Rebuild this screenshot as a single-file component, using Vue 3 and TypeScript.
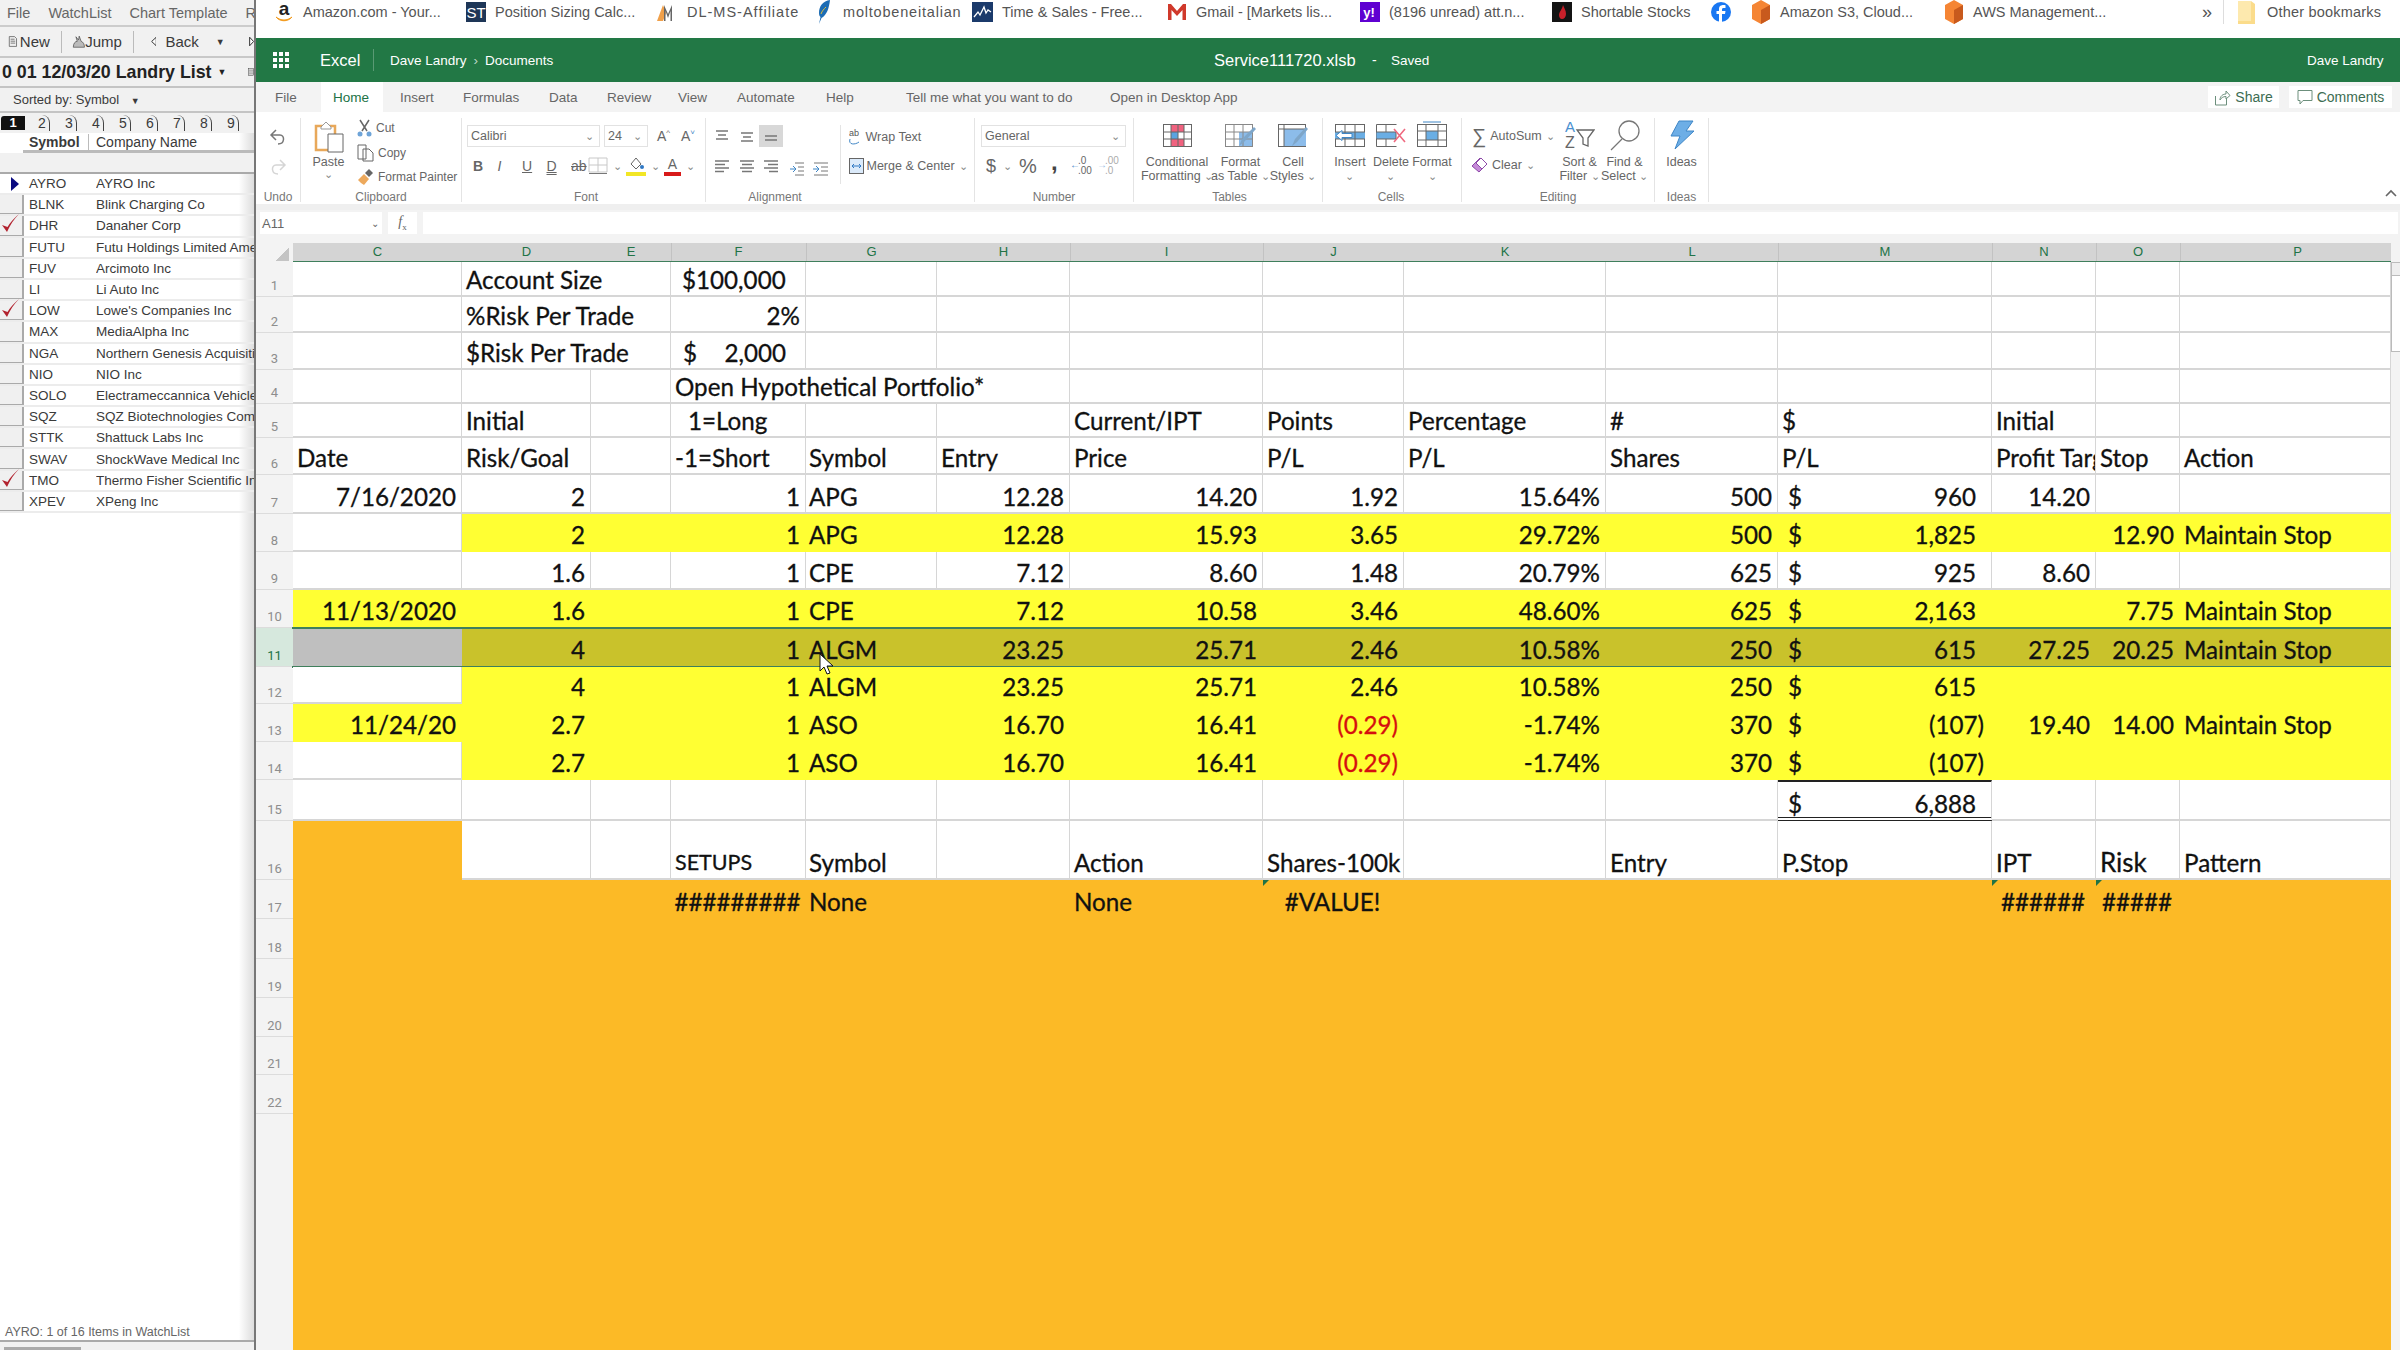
<script setup lang="ts">
type Cell = { t?: string; cls?: string; cur?: boolean; span?: number };
type Row = {
  n: number;
  h: number;
  fillFrom?: string;
  fill?: string;
  cells: Record<string, Cell | string>;
};

const columns = ["C", "D", "E", "F", "G", "H", "I", "J", "K", "L", "M", "N", "O", "P"];
const sepColumns = ["F", "G", "I", "J", "M", "N", "O", "P"];

const r = (t: string): Cell => ({ t, cls: "right" });
const red = (t: string): Cell => ({ t, cls: "right neg" });
const usd = (t: string, cls = ""): Cell => ({ t, cur: true, cls });

const rawRows: Row[] = [
  { n: 1, h: 35, cells: { D: { t: "Account Size", span: 2 }, F: { t: "$100,000", cls: "acct" } } },
  { n: 2, h: 36, cells: { D: { t: "%Risk Per Trade", span: 2 }, F: r("2%") } },
  { n: 3, h: 37, cells: { D: { t: "$Risk Per Trade", span: 2 }, F: { t: "2,000", cur: true, cls: "usd-wide" } } },
  { n: 4, h: 34, cells: { F: { t: "Open Hypothetical Portfolio*", span: 3 } } },
  { n: 5, h: 34, cells: { D: "Initial", F: { t: "1=Long", cls: "long" }, I: "Current/IPT", J: "Points", K: "Percentage", L: "#", M: "$", N: "Initial" } },
  { n: 6, h: 37, cells: { C: "Date", D: "Risk/Goal", F: "-1=Short", G: "Symbol", H: "Entry", I: "Price", J: "P/L", K: "P/L", L: "Shares", M: "P/L", N: "Profit Target", O: "Stop", P: "Action" } },
  { n: 7, h: 39, cells: { C: r("7/16/2020"), D: r("2"), F: r("1"), G: "APG", H: r("12.28"), I: r("14.20"), J: r("1.92"), K: r("15.64%"), L: r("500"), M: usd("960"), N: r("14.20") } },
  { n: 8, h: 38, fillFrom: "D", fill: "yellow", cells: { D: r("2"), F: r("1"), G: "APG", H: r("12.28"), I: r("15.93"), J: r("3.65"), K: r("29.72%"), L: r("500"), M: usd("1,825"), O: r("12.90"), P: "Maintain Stop" } },
  { n: 9, h: 38, cells: { D: r("1.6"), F: r("1"), G: "CPE", H: r("7.12"), I: r("8.60"), J: r("1.48"), K: r("20.79%"), L: r("625"), M: usd("925"), N: r("8.60") } },
  { n: 10, h: 38, fillFrom: "C", fill: "yellow", cells: { C: r("11/13/2020"), D: r("1.6"), F: r("1"), G: "CPE", H: r("7.12"), I: r("10.58"), J: r("3.46"), K: r("48.60%"), L: r("625"), M: usd("2,163"), O: r("7.75"), P: "Maintain Stop" } },
  { n: 11, h: 39, fillFrom: "D", fill: "olive", cells: { C: { cls: "grey" }, D: r("4"), F: r("1"), G: "ALGM", H: r("23.25"), I: r("25.71"), J: r("2.46"), K: r("10.58%"), L: r("250"), M: usd("615"), N: r("27.25"), O: r("20.25"), P: "Maintain Stop" } },
  { n: 12, h: 37, fillFrom: "D", fill: "yellow", cells: { D: r("4"), F: r("1"), G: "ALGM", H: r("23.25"), I: r("25.71"), J: r("2.46"), K: r("10.58%"), L: r("250"), M: usd("615") } },
  { n: 13, h: 38, fillFrom: "C", fill: "yellow", cells: { C: r("11/24/20"), D: r("2.7"), F: r("1"), G: "ASO", H: r("16.70"), I: r("16.41"), J: red("(0.29)"), K: r("-1.74%"), L: r("370"), M: usd("(107)", "paren"), N: r("19.40"), O: r("14.00"), P: "Maintain Stop" } },
  { n: 14, h: 38, fillFrom: "D", fill: "yellow", cells: { D: r("2.7"), F: r("1"), G: "ASO", H: r("16.70"), I: r("16.41"), J: red("(0.29)"), K: r("-1.74%"), L: r("370"), M: usd("(107)", "paren") } },
  { n: 15, h: 41, cells: { M: usd("6,888", "total") } },
  { n: 16, h: 59, cells: { C: { cls: "orange" }, F: { t: "SETUPS", cls: "caps" }, G: "Symbol", I: "Action", J: "Shares-100k", L: "Entry", M: "P.Stop", N: "IPT", O: { t: "Risk", cls: "large" }, P: "Pattern" } },
  { n: 17, h: 39, fillFrom: "C", fill: "orange", cells: { F: { t: "#########", cls: "center" }, G: "None", I: "None", J: { t: "#VALUE!", cls: "center tri" }, N: { t: "######", cls: "center tri" }, O: { t: "#####", cls: "center tri" } } },
  { n: 18, h: 40, fillFrom: "C", fill: "orange", cells: {} },
  { n: 19, h: 39, fillFrom: "C", fill: "orange", cells: {} },
  { n: 20, h: 39, fillFrom: "C", fill: "orange", cells: {} },
  { n: 21, h: 38, fillFrom: "C", fill: "orange", cells: {} },
  { n: 22, h: 39, fillFrom: "C", fill: "orange", cells: {} },
];

// expand each row into one entry per visible column, honouring merged cells
const rows = rawRows.map((row) => {
  const out: { col: string; cell: Cell; fill: string; span: number }[] = [];
  const from = row.fillFrom ? columns.indexOf(row.fillFrom) : 99;
  let skip = 0;
  columns.forEach((col, i) => {
    if (skip > 0) {
      skip--;
      return;
    }
    const raw = row.cells[col];
    const cell: Cell = typeof raw === "string" ? { t: raw } : raw ?? {};
    const span = cell.span ?? 1;
    skip = span - 1;
    out.push({ col, cell, span, fill: i >= from ? row.fill ?? "" : "" });
  });
  return { n: row.n, h: row.h, selected: row.n === 11, cells: out };
});

const bookmarks = [
  { id: "amazon", w: 192, ls: 0, label: "Amazon.com - Your..." },
  { id: "st", w: 192, ls: 0, label: "Position Sizing Calc..." },
  { id: "dl", w: 156, ls: 1, label: "DL-MS-Affiliate" },
  { id: "feather", w: 159, ls: 0.8, label: "moltobeneitalian" },
  { id: "chart", w: 194, ls: 0, label: "Time & Sales - Free..." },
  { id: "gmail", w: 193, ls: 0, label: "Gmail - [Markets lis..." },
  { id: "yahoo", w: 192, ls: 0, label: "(8196 unread) att.n..." },
  { id: "short", w: 159, ls: 0, label: "Shortable Stocks" },
  { id: "fb", w: 40, ls: 0, label: "" },
  { id: "aws", w: 193, ls: 0, label: "Amazon S3, Cloud..." },
  { id: "aws", w: 259, ls: 0, label: "AWS Management..." },
];

const tabs = [
  { label: "File", w: 65, pad: 19 },
  { label: "Home", w: 62, pad: 12, active: true },
  { label: "Insert", w: 80, pad: 17 },
  { label: "Formulas", w: 86, pad: 0 },
  { label: "Data", w: 58, pad: 0 },
  { label: "Review", w: 71, pad: 0 },
  { label: "View", w: 59, pad: 0 },
  { label: "Automate", w: 89, pad: 0 },
  { label: "Help", w: 80, pad: 0 },
  { label: "Tell me what you want to do", w: 204, pad: 0 },
  { label: "Open in Desktop App", w: 150, pad: 0 },
];

const watchlist = [
  ["AYRO", "AYRO Inc", "cur"],
  ["BLNK", "Blink Charging Co", ""],
  ["DHR", "Danaher Corp", "chk"],
  ["FUTU", "Futu Holdings Limited American", ""],
  ["FUV", "Arcimoto Inc", ""],
  ["LI", "Li Auto Inc", ""],
  ["LOW", "Lowe's Companies Inc", "chk"],
  ["MAX", "MediaAlpha Inc", ""],
  ["NGA", "Northern Genesis Acquisition", ""],
  ["NIO", "NIO Inc", ""],
  ["SOLO", "Electrameccannica Vehicles", ""],
  ["SQZ", "SQZ Biotechnologies Company", ""],
  ["STTK", "Shattuck Labs Inc", ""],
  ["SWAV", "ShockWave Medical Inc", ""],
  ["TMO", "Thermo Fisher Scientific Inc", "chk"],
  ["XPEV", "XPeng Inc", ""],
];
</script>

<template>
  <div class="screen">
    <aside class="side">
      <div class="side-menu">
        <span>File</span><span>WatchList</span><span>Chart Template</span><span>R</span>
      </div>
      <div class="side-tools">
        <svg width="15" height="17" viewBox="0 0 15 17"><path d="M2 1h8l3 3v12H2z" fill="#eee" stroke="#444" /><path d="M4 5h6M4 8h7M4 11h7" stroke="#444" /></svg>
        <span class="tool-new">New</span>
        <i class="tool-sep"></i>
        <svg class="tool-jump" width="21" height="22" viewBox="0 0 21 20"><path d="M2 18c0-6 3-9 6-9L6 2l4 5 1-6 3 8c3 1 5 4 5 9z" fill="#bbb" stroke="#444" /></svg>
        <span>Jump</span>
        <i class="tool-sep"></i>
        <svg class="tool-back" width="9" height="15" viewBox="0 0 9 15"><path d="M8 1 1 7.5 8 14z" fill="#fff" stroke="#222" stroke-width="1.4" /></svg>
        <span>Back</span>
        <span class="tool-drop">▼</span>
        <svg class="tool-fwd" width="8" height="15" viewBox="0 0 8 15"><path d="M1 1l6 6.500-6 6.500z" fill="#fff" stroke="#222" stroke-width="1.4" /></svg>
      </div>
      <div class="side-title">
        <span>0 01 12/03/20 Landry List</span><small>▼</small>
        <svg width="12" height="18" viewBox="0 0 12 18"><rect x="0.500" y="1" width="11.500" height="16" fill="#eee" stroke="#333" /><path d="M2 5h10M2 9h10M2 13h10" stroke="#333" /></svg>
      </div>
      <div class="side-sort">Sorted by: Symbol <small>▼</small></div>
      <div class="side-tabs">
        <b>1</b>
        <span v-for="n in 8" :key="n">{{ n + 1 }}</span>
      </div>
      <div class="side-head"><b>Symbol</b><span>Company Name</span></div>
      <div class="side-band"></div>
      <div v-for="(w, i) in watchlist" :key="w[0]" class="side-row" :class="{ first: i === 0 }">
        <div class="side-mark">
          <svg v-if="w[2] === 'cur'" width="10" height="14" viewBox="0 0 10 14"><path d="M1 0l8 7-8 7z" fill="#0a0a80" /></svg>
          <svg v-if="w[2] === 'chk'" class="check" width="19" height="21" viewBox="0 0 19 21"><path d="M1 12l5 7C9 12 13 6 18 1 13 5 9 10 6.500 14z" fill="#b2232f" /></svg>
        </div>
        <span class="side-sym">{{ w[0] }}</span>
        <span class="side-name">{{ w[1] }}</span>
      </div>
      <div class="side-fill"></div>
      <div class="side-status">AYRO: 1 of 16 Items in WatchList</div>
      <div class="side-bottom"><i></i></div>
    </aside>

    <main class="excel">
      <nav class="bookmarks">
        <a v-for="(b, i) in bookmarks" :key="i" class="bm" :style="{ width: b.w + 'px', letterSpacing: b.ls + 'px' }">
          <span class="bm-icon">
            <svg v-if="b.id === 'amazon'" width="20" height="24" viewBox="0 0 20 24">
              <text x="10" y="15" text-anchor="middle" font-size="19" font-weight="700" font-family="Liberation Sans" fill="#222">a</text>
              <path d="M2 17c5 4 11 4 16 0-4 5-12 5-16 0z" fill="#f39a1c" stroke="#f39a1c" />
            </svg>
            <svg v-else-if="b.id === 'st'" width="20" height="20" viewBox="0 0 20 20">
              <rect width="20" height="20" fill="#1e3657" />
              <text x="10" y="16" text-anchor="middle" font-size="15" font-family="Liberation Sans" fill="#fff">ST</text>
            </svg>
            <svg v-else-if="b.id === 'dl'" width="21" height="20" viewBox="0 0 21 20">
              <path d="M0 19 6 3l3 8-3 8z" fill="#f0a04a" />
              <path d="M7 19V3l4 9 4-9v16h-1.500V9L11 16 8.500 9v10z" fill="#666" />
            </svg>
            <svg v-else-if="b.id === 'feather'" width="14" height="24" viewBox="0 0 14 24">
              <path d="M13 0C6 1 2 6 2 13c0 2 .5 3 1.500 4L2 24l2.500-6C10 15 12 8 13 0z" fill="#1c6cb4" />
              <path d="M4 14c1-3 3-5 5-7" stroke="#e0c040" fill="none" />
            </svg>
            <svg v-else-if="b.id === 'chart'" width="21" height="20" viewBox="0 0 21 20">
              <rect width="21" height="20" fill="#1b3a6b" />
              <path d="M2 15l4-5 2 3 4-8 2 6 2-3 3 2" stroke="#fff" fill="none" stroke-width="1.300" />
            </svg>
            <svg v-else-if="b.id === 'gmail'" width="20" height="18" viewBox="0 0 20 18">
              <path d="M1 1h3l6 7 6-7h3v16h-3.500V7L10 13 4.500 7v10H1z" fill="#d0392b" />
            </svg>
            <svg v-else-if="b.id === 'yahoo'" width="20" height="20" viewBox="0 0 20 20">
              <rect width="20" height="20" fill="#5f01d1" />
              <text x="9" y="15" text-anchor="middle" font-size="13" font-weight="700" font-family="Liberation Sans" fill="#fff">y!</text>
            </svg>
            <svg v-else-if="b.id === 'short'" width="20" height="20" viewBox="0 0 20 20">
              <rect width="20" height="20" fill="#141414" />
              <path d="M11 3c1 3 3 5 3 9 0 3-2 5-4 5s-3-2-3-4c0-3 3-5 4-10z" fill="#c8202a" />
            </svg>
            <svg v-else-if="b.id === 'fb'" width="20" height="20" viewBox="0 0 20 20">
              <circle cx="10" cy="10" r="10" fill="#1977f2" />
              <path d="M11 20v-8h3l.500-3H11V7.500c0-1 .5-1.500 1.600-1.500H14.500V3.300C12 2.700 8 3 8 7v2H5.500v3H8v8z" fill="#fff" />
            </svg>
            <svg v-else-if="b.id === 'aws'" width="20" height="24" viewBox="0 0 20 24">
              <path d="M10 0l9 5v14l-9 5-9-5V5z" fill="#f58534" />
              <path d="M10 10l9-5v14l-9 5z" fill="#c85a1d" />
            </svg>
          </span>
          <span v-if="b.label" class="bm-text">{{ b.label }}</span>
        </a>
        <span class="bm-more">»</span>
        <i class="bm-sep"></i>
        <svg width="17" height="23" viewBox="0 0 17 23"><path d="M0 0h13l4 3v20H0z" fill="#fbdc8b" /><path d="M0 0h13v20H0z" fill="#fde9ae" /></svg>
        <span class="bm-other">Other bookmarks</span>
      </nav>

      <header class="title">
        <svg class="waffle" width="16" height="16" viewBox="0 0 16 16" fill="#fff">
          <rect width="4" height="4" /><rect x="6" width="4" height="4" /><rect x="12" width="4" height="4" />
          <rect y="6" width="4" height="4" /><rect x="6" y="6" width="4" height="4" /><rect x="12" y="6" width="4" height="4" />
          <rect y="12" width="4" height="4" /><rect x="6" y="12" width="4" height="4" /><rect x="12" y="12" width="4" height="4" />
        </svg>
        <span class="app-name">Excel</span>
        <i class="title-sep"></i>
        <span class="crumbs">Dave Landry<em>›</em>Documents</span>
        <span class="doc">Service111720.xlsb</span>
        <span class="dash">-</span>
        <span class="saved">Saved</span>
        <span class="user">Dave Landry</span>
      </header>

      <div class="tabs">
        <span
          v-for="t in tabs"
          :key="t.label"
          class="tab"
          :class="{ active: t.active }"
          :style="{ width: t.w + 'px', paddingLeft: t.pad + 'px' }"
          >{{ t.label }}</span
        >
        <span class="tab-btn share">
          <svg width="17" height="17" viewBox="0 0 17 17" fill="none" stroke="#6c8f7c"><path d="M1.500 7v9h11V9M6 11c0-4 3-6 6-6V2l4 4.500L12 10V7.500C9 7.500 7 9 6 11z" /></svg>
          Share
        </span>
        <span class="tab-btn comments">
          <svg width="16" height="16" viewBox="0 0 16 16" fill="none" stroke="#6c8f7c"><path d="M1 1.500h14v10H6L3 15v-3.500H1z" /></svg>
          Comments
        </span>
      </div>

      <section class="ribbon">
        <div class="group g-undo">
          <div class="g-body undo-col">
            <svg width="18" height="18" viewBox="0 0 18 18" fill="none" stroke="#777" stroke-width="1.500"><path d="M7 2 2 7l5 5M2 7h9c5 0 5 9-2 9" /></svg>
            <svg width="18" height="18" viewBox="0 0 18 18" fill="none" stroke="#d5d5d5" stroke-width="1.500"><path d="M11 2l5 5-5 5M16 7H7c-5 0-5 9 2 9" /></svg>
          </div>
          <div class="g-label">Undo</div>
        </div>

        <div class="group g-clip">
          <div class="g-body clip-body">
            <div class="paste">
              <svg width="30" height="32" viewBox="0 0 30 32">
                <path d="M2 5h19v24H2z" fill="#fff" stroke="#e8a85a" stroke-width="2.500" />
                <path d="M7 6l5-5 5 5v2H7z" fill="#fff" stroke="#999" />
                <path d="M14 13h15v18H14z" fill="#fff" stroke="#666" />
              </svg>
              <span>Paste</span>
              <small>⌄</small>
            </div>
            <div class="clip-list">
              <span>
                <svg width="15" height="18" viewBox="0 0 15 18" fill="none"><path d="M3 1l7 11M12 1 5 12" stroke="#666" stroke-width="1.500" /><circle cx="3" cy="15" r="2.500" fill="#6ea4d8" /><circle cx="12" cy="15" r="2.500" fill="#6ea4d8" /></svg>
                Cut
              </span>
              <span>
                <svg width="17" height="18" viewBox="0 0 17 18" fill="none" stroke="#666"><path d="M1 1h8v14H1zM6 5h6l4 4v8H6z" fill="#fff" /></svg>
                Copy
              </span>
              <span>
                <svg width="17" height="18" viewBox="0 0 17 18"><path d="M1 12l6-6 5 5-5 6-3-2z" fill="#eda95c" /><path d="M8 5l4-4 4 4-4 4z" fill="#666" /></svg>
                Format Painter
              </span>
            </div>
          </div>
          <div class="g-label">Clipboard</div>
        </div>

        <div class="group g-font">
          <div class="g-body stack">
            <div class="line">
              <span class="box font-name">Calibri<small>⌄</small></span>
              <span class="box font-size">24<small>⌄</small></span>
              <span class="grow">A<sup>^</sup></span>
              <span class="grow blue">A<sup>˅</sup></span>
            </div>
            <div class="line font-tools">
              <b>B</b><i class="it">I</i><u>U</u><u class="dbl">D</u><s>ab</s>
              <svg width="20" height="18" viewBox="0 0 20 18" fill="none" stroke="#c8c8c8"><path d="M1 1h18v14H1zM10 1v14M1 8h18" /><path d="M1 16.500h18" stroke="#777" /></svg>
              <small>⌄</small>
              <svg class="fill" width="20" height="20" viewBox="0 0 20 20"><path d="M5 8l5-6 5 6-5 5z" fill="#fff" stroke="#666" /><circle cx="16" cy="11" r="2" fill="#2f78c4" /><rect y="16" width="20" height="4" fill="#f2e625" /></svg>
              <small>⌄</small>
              <span class="color-a">A</span>
              <small>⌄</small>
            </div>
          </div>
          <div class="g-label">Font</div>
        </div>

        <div class="group g-align">
          <div class="g-body align-body">
            <div class="align-grid">
              <svg v-for="n in 6" :key="n" class="al" :class="{ on: n === 3 }" width="16" height="14" viewBox="0 0 16 14" fill="none" stroke="#777" stroke-width="1.400">
                <path v-if="n === 1" d="M2 2h12M4 6h8M2 10h12" />
                <path v-else-if="n === 2" d="M2 4h12M4 8h8M2 12h12" />
                <path v-else-if="n === 3" d="M2 7h12M2 11h12" />
                <path v-else-if="n === 4" d="M1 2h14M1 5.500h10M1 9h14M1 12.500h9" />
                <path v-else-if="n === 5" d="M1 2h14M3 5.500h10M1 9h14M3 12.500h10" />
                <path v-else d="M1 2h14M5 5.500h10M1 9h14M6 12.500h9" />
              </svg>
            </div>
            <div class="indent">
              <svg width="16" height="14" viewBox="0 0 16 14" fill="none" stroke="#777"><path d="M6 1h9M6 13h9M9 5h6M9 9h6" /><path d="M1 7h6M4 4l3 3-3 3" stroke="#3f86c6" /></svg>
              <svg width="16" height="14" viewBox="0 0 16 14" fill="none" stroke="#777"><path d="M1 1h14M1 13h14M8 5h7M8 9h7" /><path d="M0 7h6M3 4l3 3-3 3" stroke="#3f86c6" /></svg>
            </div>
            <div class="merge-col">
              <span>
                <svg width="14" height="18" viewBox="0 0 14 18" fill="none"><text x="0" y="8" font-size="9" font-family="Liberation Sans" fill="#555">ab</text><path d="M1 11c-2 6 5 6 9 3" stroke="#3f86c6" /></svg>
                Wrap Text
              </span>
              <span>
                <svg width="15" height="16" viewBox="0 0 15 16"><rect x="0.500" y="0.500" width="14" height="15" fill="#dbeafa" stroke="#666" /><path d="M3 8h9M3 8l2-2M3 8l2 2M12 8l-2-2M12 8l-2 2" stroke="#2f78c4" fill="none" /></svg>
                Merge &amp; Center <small>⌄</small>
              </span>
            </div>
          </div>
          <div class="g-label align-label">Alignment</div>
        </div>

        <div class="group g-num">
          <div class="g-body stack">
            <div class="line"><span class="box num-fmt">General<small>⌄</small></span></div>
            <div class="line num-tools">
              <span class="dollar">$</span><small>⌄</small><span class="pct">%</span><span class="comma">,</span>
              <span class="dec"><em>←</em>.0<br />.00</span>
              <span class="dec faint"><em>→</em>.00<br />.0</span>
            </div>
          </div>
          <div class="g-label">Number</div>
        </div>

        <div class="group g-tables">
          <div class="g-body big-row">
            <div class="big cf">
              <svg width="29" height="23" viewBox="0 0 29 23">
                <rect x="0.500" y="0.500" width="28" height="22" fill="#fff" stroke="#666" />
                <rect x="8" y="1" width="13" height="7" fill="#f0627f" /><rect x="8" y="15" width="13" height="7" fill="#f0627f" /><rect x="8" y="8" width="7" height="7" fill="#5ba3e0" />
                <path d="M8 0v23M15 0v23M21 0v23M0 8h29M0 15h29" stroke="#666" fill="none" />
              </svg>
              <span>Conditional<br />Formatting <small>⌄</small></span>
            </div>
            <div class="big ft">
              <svg width="31" height="23" viewBox="0 0 31 23">
                <rect x="0.500" y="0.500" width="27" height="22" fill="#fff" stroke="#888" />
                <rect x="14" y="8" width="13" height="14" fill="#8cbcea" />
                <path d="M9 0v23M18 0v23M0 8h28M0 15h28" stroke="#888" fill="none" />
                <path d="M14 22l3-7L29 3l2 2-12 13z" fill="#7ea6c9" />
              </svg>
              <span>Format<br />as Table <small>⌄</small></span>
            </div>
            <div class="big cs">
              <svg width="30" height="23" viewBox="0 0 30 23">
                <rect x="0.500" y="0.500" width="27" height="22" fill="#fff" stroke="#666" />
                <rect x="6" y="5" width="22" height="17" fill="#8cbcea" />
                <path d="M6 0v23M0 5h28" stroke="#666" fill="none" />
                <path d="M14 22l3-7L28 3l2 2-11 13z" fill="#7ea6c9" />
              </svg>
              <span>Cell<br />Styles <small>⌄</small></span>
            </div>
          </div>
          <div class="g-label">Tables</div>
        </div>

        <div class="group g-cells">
          <div class="g-body big-row">
            <div class="big">
              <svg width="30" height="23" viewBox="0 0 30 23">
                <rect x="0.500" y="0.500" width="29" height="22" fill="#fff" stroke="#666" />
                <rect x="0" y="8" width="30" height="7" fill="#6aaee4" />
                <path d="M10 0v23M20 0v23M0 8h30M0 15h30" stroke="#666" fill="none" />
                <path d="M1 11.500l6-5v3h10v4H7v3z" fill="#fff" stroke="#3f86c6" />
              </svg>
              <span>Insert<br /><small>⌄</small></span>
            </div>
            <div class="big">
              <svg width="30" height="23" viewBox="0 0 30 23">
                <path d="M0.500 0.500h20M0.500 22.500h20M0.500.5v22M10 0v23" stroke="#666" fill="none" />
                <rect x="0" y="8" width="20" height="7" fill="#6aaee4" stroke="#666" />
                <path d="M18 5l11 13M29 5 18 18" stroke="#ef6a80" stroke-width="1.600" />
              </svg>
              <span>Delete<br /><small>⌄</small></span>
            </div>
            <div class="big fmt-cell">
              <svg width="30" height="26" viewBox="0 0 30 26">
                <path d="M6 1h18" stroke="#3f86c6" />
                <rect x="0.500" y="3.500" width="29" height="22" fill="#fff" stroke="#666" />
                <rect x="9" y="10" width="12" height="9" fill="#6aaee4" />
                <path d="M9 3v23M21 3v23M0 10h30M0 19h30" stroke="#666" fill="none" />
              </svg>
              <span>Format<br /><small>⌄</small></span>
            </div>
          </div>
          <div class="g-label">Cells</div>
        </div>

        <div class="group g-edit">
          <div class="g-body edit-body">
            <div class="merge-col edit-col">
              <span><em class="sigma">∑</em> AutoSum <small>⌄</small></span>
              <span>
                <svg width="16" height="16" viewBox="0 0 16 16"><path d="M0 9l8-8 7 6-8 8z" fill="#c58ad8" stroke="#8d4aa8" /><path d="M4 6l6 6 5-5-6-6z" fill="#fff" stroke="#8d4aa8" /></svg>
                Clear <small>⌄</small>
              </span>
            </div>
            <div class="big sort">
              <svg width="30" height="29" viewBox="0 0 30 29" fill="none">
                <text x="0" y="12" font-size="15" font-family="Liberation Sans" fill="#4a90d0">A</text>
                <text x="0" y="28" font-size="16" font-family="Liberation Sans" fill="#666">Z</text>
                <path d="M12 10h17l-6 8v8l-5-2v-6z" stroke="#666" stroke-width="1.300" />
              </svg>
              <span>Sort &amp;<br />Filter <small>⌄</small></span>
            </div>
            <div class="big find">
              <svg width="30" height="31" viewBox="0 0 30 31" fill="none" stroke="#777" stroke-width="1.300"><circle cx="19" cy="11" r="10" /><path d="M12 19 1 30" /></svg>
              <span>Find &amp;<br />Select <small>⌄</small></span>
            </div>
          </div>
          <div class="g-label">Editing</div>
        </div>

        <div class="group g-ideas">
          <div class="g-body">
            <div class="big bolt">
              <svg width="24" height="29" viewBox="0 0 24 29"><path d="M9 1h14l-7 10h8L5 29l5-13H1z" fill="#6daee6" stroke="#3f86c6" /></svg>
              <span>Ideas</span>
            </div>
          </div>
          <div class="g-label">Ideas</div>
        </div>

        <div class="collapse">
          <svg width="12" height="8" viewBox="0 0 12 8" fill="none" stroke="#666" stroke-width="1.600"><path d="M1 7l5-5 5 5" /></svg>
        </div>
      </section>

      <div class="formula">
        <div class="name-box">A11<small>⌄</small></div>
        <div class="fx"><em>f</em><sub>x</sub></div>
        <div class="fx-input"></div>
      </div>

      <div class="sheet">
        <div class="col-head">
          <div class="corner"><i></i></div>
          <div v-for="c in columns" :key="c" class="col-label" :class="[{ sep: sepColumns.includes(c) }, 'col-' + c]">{{ c }}</div>
        </div>

        <div v-for="row in rows" :key="row.n" class="row" :class="{ selected: row.selected }" :style="{ height: row.h + 'px' }">
          <div class="row-num">{{ row.n }}</div>
          <div
            v-for="item in row.cells"
            :key="item.col"
            class="cell"
            :class="[item.fill, item.cell.cls, 'in-' + item.col, { money: item.cell.cur }]"
            :style="item.span > 1 ? { gridColumn: 'span ' + item.span } : undefined"
          >
            <span v-if="item.cell.cur" class="cur">$</span>
            <span v-if="item.cell.t" class="txt">{{ item.cell.t }}</span>
          </div>
        </div>

        <div class="row rest">
          <div class="row-num"></div>
          <div class="rest-fill"></div>
        </div>

        <svg class="cursor" width="16" height="23" viewBox="0 0 16 23"><path d="M1 1v17l4-4 3 7 3-1-3-7h6z" fill="#fff" stroke="#111" /></svg>
        <div class="vscroll"><i></i></div>
      </div>
    </main>
  </div>
</template>

<style scoped>
.screen {
  display: flex;
  width: 2400px;
  height: 1350px;
  overflow: hidden;
  background: #fff;
  color: #222;
  font-family: "Liberation Sans", sans-serif;
}

/* watchlist window on the left */
.side {
  display: flex;
  flex-direction: column;
  flex: none;
  box-sizing: border-box;
  border-right: 2px solid #777;
  width: 256px;
  background: linear-gradient(90deg, #fff 94%, #ddd);
  color: #3a3a3a;
  font-size: 13.500px;
  overflow: hidden;
}
.side-menu {
  display: flex;
  flex: none;
  gap: 18px;
  align-items: center;
  box-sizing: border-box;
  border-bottom: 2px solid #ccc;
  background: #f1f1f1;
  padding-left: 7px;
  height: 27px;
  color: #666;
  font-size: 14.500px;
  white-space: nowrap;
}
.side-tools {
  display: flex;
  flex: none;
  align-items: center;
  box-sizing: border-box;
  border-bottom: 2px solid #c8c8c8;
  background: #f1f1f1;
  padding-left: 8px;
  height: 31px;
  font-size: 15px;
  white-space: nowrap;
}
.tool-new {
  margin-left: 2px;
}
.tool-sep {
  display: block;
  margin: 0 10px 0 11px;
  background: #bbb;
  width: 1px;
  height: 22px;
}
.tool-back {
  margin: 0 9px 0 7px;
}
.tool-drop {
  margin-left: 17px;
  font-size: 9px;
}
.tool-fwd {
  margin-left: 24px;
}
.side-title {
  display: flex;
  flex: none;
  gap: 6px;
  align-items: center;
  box-sizing: border-box;
  border-bottom: 2px solid #c4c4c4;
  background: #f1f1f1;
  padding-left: 2px;
  height: 30px;
  color: #222;
  font-weight: 700;
  font-size: 17.800px;
  white-space: nowrap;
}
.side-title small {
  font-size: 9px;
}
.side-title svg {
  margin-left: 16px;
}
.side-sort {
  flex: none;
  box-sizing: border-box;
  border-bottom: 2px solid #c4c4c4;
  background: #f1f1f1;
  padding-left: 13px;
  height: 25px;
  font-size: 13px;
  line-height: 24px;
  white-space: nowrap;
}
.side-sort small {
  margin-left: 8px;
  font-size: 9px;
}
.side-tabs {
  display: flex;
  flex: none;
  align-items: center;
  background: #f1f1f1;
  padding-left: 1px;
  height: 20px;
}
.side-tabs b {
  display: block;
  margin-right: 13px;
  border-radius: 3px 0 0 0;
  background: #111;
  width: 25px;
  height: 14px;
  color: #fff;
  font-size: 13px;
  line-height: 14px;
  text-align: center;
}
.side-tabs span {
  flex: none;
  margin-right: 15px;
  border-top-right-radius: 8px;
  border-right: 1px solid #444;
  padding-right: 3px;
  width: 8px;
  font-size: 14px;
}
.side-head {
  display: flex;
  flex: none;
  align-items: center;
  box-sizing: border-box;
  margin-left: 23px;
  border-bottom: 3px solid #bbb;
  padding-left: 6px;
  height: 20px;
  font-size: 14px;
}
.side-head b {
  box-sizing: border-box;
  border-right: 1px solid #bbb;
  width: 60px;
}
.side-head span {
  padding-left: 7px;
}
.side-band {
  flex: none;
  box-sizing: border-box;
  border-bottom: 2px solid #aaa;
  background: #f1f1f1;
  height: 21px;
}
.side-row {
  display: flex;
  flex: none;
  align-items: center;
  box-sizing: border-box;
  border-bottom: 2px solid #ececec;
  height: 21.200px;
  white-space: nowrap;
}
.side-mark {
  display: flex;
  position: relative;
  flex: none;
  align-items: center;
  justify-content: flex-end;
  box-sizing: border-box;
  border-right: 2px solid #aaa;
  border-bottom: 1px solid #aaa;
  background: #f0f0f0;
  padding-right: 4px;
  width: 24px;
  height: 100%;
}
.first .side-mark {
  border: none;
  background: #fff;
}
.check {
  position: absolute;
  top: -3px;
  right: 2px;
}
.side-sym {
  flex: none;
  box-sizing: border-box;
  padding-left: 5px;
  width: 72px;
}
.side-name {
  width: 158px;
  overflow: hidden;
}
.side-fill {
  flex: 1;
}
.side-status {
  flex: none;
  padding-left: 5px;
  height: 15px;
  color: #666;
  font-size: 12.500px;
  line-height: 14px;
}
.side-bottom {
  flex: none;
  box-sizing: border-box;
  border-top: 2px solid #aaa;
  background: #f1f1f1;
  padding: 5px 0 0 4px;
  height: 10px;
}
.side-bottom i {
  display: block;
  background: #aaa;
  width: 77px;
  height: 3px;
}

/* browser bookmarks */
.excel {
  display: flex;
  flex: 1;
  flex-direction: column;
  min-width: 0;
}
.bookmarks {
  display: flex;
  flex: none;
  align-items: center;
  box-sizing: border-box;
  background: #fff;
  padding: 0 0 14px 17px;
  height: 38px;
  color: #555;
  font-size: 14.500px;
  white-space: nowrap;
}
.bm {
  display: flex;
  flex: none;
  gap: 9px;
  align-items: center;
}
.bm-icon {
  display: flex;
  flex: none;
  align-items: center;
  justify-content: center;
  width: 21px;
}
.bm-more {
  margin-right: 15px;
  width: 6px;
  font-size: 18px;
}
.bm-sep {
  display: block;
  margin-right: 14px;
  background: #ddd;
  width: 1px;
  height: 24px;
}
.bm-other {
  margin-left: 12px;
  letter-spacing: 0.2px;
}

.title {
  display: flex;
  flex: none;
  align-items: center;
  background: #227845;
  padding-left: 17px;
  height: 44px;
  color: #fff;
}
.waffle {
  flex: none;
}
.app-name {
  margin-left: 31px;
  width: 37px;
  font-size: 16.500px;
}
.title-sep {
  display: block;
  margin: 0 16px;
  background: #5a9a74;
  width: 1px;
  height: 22px;
}
.crumbs {
  width: 824px;
  font-size: 13.500px;
}
.crumbs em {
  margin: 0 7px;
  color: #bcd5c6;
  font-style: normal;
}
.doc {
  width: 141px;
  font-size: 16.500px;
}
.dash {
  margin-left: 17px;
  width: 19px;
  font-size: 14px;
}
.saved {
  width: 916px;
  font-size: 13.500px;
}
.user {
  font-size: 13.500px;
  white-space: nowrap;
}

.tabs {
  display: flex;
  flex: none;
  align-items: center;
  box-sizing: border-box;
  background: #f3f3f3;
  height: 30px;
  color: #666;
  font-size: 13.500px;
  white-space: nowrap;
}
.tab {
  flex: none;
  box-sizing: border-box;
  height: 100%;
  line-height: 32px;
}
.tab.active {
  background: #fff;
  color: #217346;
}
.tab-btn {
  display: flex;
  flex: none;
  gap: 4px;
  align-items: center;
  justify-content: center;
  box-sizing: border-box;
  background: #fff;
  height: 22px;
  color: #3c6d52;
  font-size: 14px;
}
.share {
  margin-left: 948px;
  width: 71px;
}
.comments {
  margin-left: 10px;
  width: 103px;
}

/* ribbon */
.ribbon {
  display: flex;
  position: relative;
  flex: none;
  box-sizing: border-box;
  border-bottom: 6px solid #efefef;
  background: #fff;
  padding-top: 6px;
  height: 98px;
  color: #666;
  font-size: 12.500px;
  white-space: nowrap;
}
.ribbon small {
  color: #888;
  font-size: 11px;
}
.group {
  display: flex;
  flex: none;
  flex-direction: column;
  box-sizing: border-box;
  border-right: 1px solid #e4e4e4;
  height: 84px;
}
.g-body {
  display: flex;
  flex: none;
  box-sizing: border-box;
  height: 70px;
}
.g-label {
  color: #777;
  font-size: 12px;
  line-height: 18px;
  text-align: center;
}
.g-undo {
  width: 45px;
}
.undo-col {
  flex-direction: column;
  gap: 12px;
  align-items: center;
  padding-top: 10px;
}
.g-clip {
  width: 161px;
}
.clip-body {
  padding-left: 5px;
}
.paste {
  display: flex;
  flex-direction: column;
  align-items: center;
  padding-top: 3px;
  width: 45px;
}
.paste span {
  margin-top: 2px;
  line-height: 15px;
}
.paste small {
  line-height: 8px;
}
.clip-list {
  display: flex;
  flex-direction: column;
  gap: 2.500px;
  margin-top: -1px;
  margin-left: 6px;
  font-size: 12px;
}
.clip-list span,
.merge-col span {
  display: flex;
  gap: 4px;
  align-items: center;
  height: 22px;
}
.stack {
  flex-direction: column;
  gap: 8px;
  padding-top: 7px;
}
.line {
  display: flex;
  align-items: center;
  height: 22px;
}
.box {
  display: flex;
  align-items: center;
  justify-content: space-between;
  box-sizing: border-box;
  border: 1px solid #e2e2e2;
  padding: 0 5px 0 3px;
  height: 22px;
}
.g-font {
  padding-left: 5px;
  width: 244px;
}
.font-name {
  width: 133px;
}
.font-size {
  margin-left: 4px;
  width: 44px;
}
.grow {
  margin-left: 9px;
  width: 15px;
  font-size: 14px;
}
.grow + .grow {
  margin-left: 9px;
}
.grow sup {
  font-size: 8px;
}
.blue sup {
  color: #3f86c6;
}
.font-tools {
  gap: 0;
  padding-left: 6px;
  font-size: 14px;
}
.font-tools > * {
  flex: none;
}
.font-tools b,
.font-tools .it,
.font-tools u {
  width: 24.500px;
}
.font-tools s {
  width: 17px;
}
.font-tools small {
  margin: 0 4px 0 5px;
}
.dbl {
  text-decoration-style: double;
}
.color-a {
  box-sizing: border-box;
  border-bottom: 4px solid #d81a1a;
  width: 17px;
  height: 20px;
  font-size: 14px;
  line-height: 16px;
  text-align: center;
}
.g-align {
  position: relative;
  width: 269px;
}
.align-body {
  padding: 7px 0 0 4px;
}
.align-grid {
  display: grid;
  grid-template-columns: repeat(3, 24.500px);
  grid-auto-rows: 30px;
  align-items: start;
  justify-items: center;
  height: 52px;
}
.al {
  margin-top: 4px;
}
.al.on {
  margin-top: 0;
  background: #d8d8d8;
  padding: 4px 4px;
}
.indent {
  display: flex;
  gap: 8px;
  align-items: flex-start;
  margin-top: 37px;
  margin-left: 5px;
}
.merge-col {
  display: flex;
  flex-direction: column;
  gap: 7px;
  margin-left: 11px;
  border-left: 1px solid #e4e4e4;
  padding: 1px 0 6px 8px;
  height: 52px;
}
.g-align .merge-col svg {
  margin-right: -1px;
}
.align-label {
  padding-right: 130px;
}
.g-num {
  width: 159px;
}
.num-fmt {
  margin-left: 6px;
  width: 145px;
}
.num-tools {
  padding-left: 11px;
}
.dollar {
  font-size: 18px;
}
.num-tools small {
  margin: 0 5px 0 7px;
}
.pct {
  margin-left: 2px;
  width: 24px;
  font-size: 20px;
}
.comma {
  align-self: flex-start;
  margin-left: 8px;
  width: 19px;
  color: #444;
  font-weight: 700;
  font-size: 24px;
  line-height: 14px;
}
.dec {
  position: relative;
  padding-left: 8px;
  width: 19px;
  font-size: 10px;
  line-height: 10px;
}
.dec em {
  position: absolute;
  top: 4px;
  left: 0;
  color: #3f86c6;
  font-style: normal;
}
.faint {
  opacity: 0.55;
}
.big-row {
  justify-content: space-between;
}
.big {
  display: flex;
  flex-direction: column;
  align-items: center;
  text-align: center;
}
.big svg {
  flex: none;
  margin-top: 6px;
  margin-bottom: 8px;
}
.big span {
  line-height: 14px;
}
.g-tables {
  padding: 0 8px 0 11px;
  width: 189px;
}
.cf {
  width: 64px;
}
.ft {
  width: 50px;
}
.cs {
  width: 42px;
}
.g-cells {
  padding: 0 9px 0 7px;
  width: 139px;
}
.g-cells .big {
  width: 40px;
}
.g-cells .fmt-cell svg {
  margin-top: 3px;
}
.g-edit {
  width: 193px;
}
.edit-body {
  padding-left: 2px;
}
.edit-col {
  flex: none;
  margin-left: 8px;
  border: none;
  padding: 7px 0 0;
  width: 84px;
}
.sigma {
  color: #666;
  font-style: normal;
  font-size: 20px;
  line-height: 16px;
}
.sort {
  width: 47px;
}
.sort svg {
  margin-top: 2px;
  margin-bottom: 6px;
}
.find {
  margin-left: 0;
  width: 43px;
}
.find svg {
  margin-top: 2px;
  margin-bottom: 4px;
}
.g-ideas {
  width: 54px;
}
.bolt {
  width: 53px;
}
.bolt svg {
  margin-top: 2px;
  margin-bottom: 6px;
}
.collapse {
  position: absolute;
  right: 3px;
  bottom: 4px;
}

.formula {
  display: flex;
  flex: none;
  gap: 6px;
  align-items: center;
  box-sizing: border-box;
  background: #f3f3f3;
  padding: 0 2px 7px 4px;
  height: 33px;
  color: #666;
}
.name-box {
  display: flex;
  align-items: center;
  justify-content: space-between;
  box-sizing: border-box;
  background: #fff;
  padding: 0 3px 0 2px;
  width: 122px;
  height: 22px;
  font-size: 13px;
}
.name-box small {
  font-size: 10px;
}
.fx {
  box-sizing: border-box;
  background: #fff;
  width: 29px;
  height: 22px;
  font-family: "Liberation Serif", serif;
  font-size: 14px;
  line-height: 20px;
  text-align: center;
}
.fx sub {
  font-size: 9px;
}
.fx-input {
  flex: 1;
  background: #fff;
  height: 22px;
}

/* worksheet */
.sheet {
  display: flex;
  position: relative;
  flex: 1;
  flex-direction: column;
  min-height: 0;
  overflow: hidden;
  background: #f3f3f3;
  font-family: Lato, sans-serif;
}
.col-head,
.row {
  display: grid;
  position: relative;
  grid-template-columns: 37px 169px 129px 80px 135px 131px 133px 193px 141px 202px 172px 214px 104px 84px 211px;
  flex: none;
  width: 2135px;
}
.col-head {
  height: 19px;
}
.corner {
  display: flex;
  align-items: flex-end;
  justify-content: flex-end;
  padding: 0 4px 2px 0;
}
.corner i {
  display: block;
  background: linear-gradient(135deg, transparent 50%, #c4c4c4 50%);
  width: 14px;
  height: 14px;
}
.col-label {
  box-sizing: border-box;
  border-bottom: 2px solid #3f7f5c;
  background: #d4d4d4;
  color: #217346;
  font-family: "Liberation Sans", sans-serif;
  font-size: 13px;
  line-height: 18px;
  text-align: center;
}
.col-label.sep {
  box-shadow: inset 1px 0 #c2c2c2;
}
.col-P {
  padding-left: 24px;
}
.row-num {
  display: flex;
  align-items: flex-end;
  justify-content: center;
  box-sizing: border-box;
  border-bottom: 1px solid #dcdcdc;
  padding-bottom: 3px;
  color: #8d8d8d;
  font-family: Roboto, sans-serif;
  font-size: 13px;
}
.cell {
  display: flex;
  position: relative;
  align-items: flex-end;
  box-sizing: border-box;
  border-right: 1px solid #d6d6d6;
  border-bottom: 2px solid #d6d6d6;
  background: #fff;
  padding: 0 5px 2px 4px;
  min-width: 0;
  height: 100%;
  overflow: hidden;
  color: #111;
  font-size: 24.200px;
  line-height: 27px;
  white-space: nowrap;
  -webkit-text-stroke: 0.3px currentColor;
}
.cell.in-G {
  padding-left: 3px;
}
.cell.right {
  justify-content: flex-end;
  padding-right: 5px;
}
.cell.center {
  justify-content: center;
}
.cell.acct {
  padding-left: 11px;
}
.cell.long {
  padding-left: 17px;
}
.cell.yellow,
.cell.orange,
.cell.olive,
.cell.grey {
  border-color: transparent;
}
.cell.yellow {
  background: #ffff33;
}
.cell.orange {
  background: #fcba26;
}
.cell.olive {
  background: #c9c22b;
}
.cell.grey {
  background: #bfbfbf;
}
.cell.neg {
  color: #d50f0f;
}
.cell.caps {
  font-size: 21.500px;
}
.cell.large {
  font-size: 26px;
}
.cell.money {
  justify-content: space-between;
  padding: 0 15px 2px 10px;
}
.cell.money.paren {
  padding-right: 7px;
}
.cell.money.usd-wide {
  padding: 0 19px 2px 12px;
}
.cell.total {
  border-top: 2px solid #222;
  border-bottom: 4px double #222;
  padding-bottom: 0;
}
.cell.tri::before {
  position: absolute;
  top: 0;
  left: 0;
  border-width: 6px 6px 0 0;
  border-style: solid;
  border-color: #217346 transparent transparent transparent;
  content: "";
}
.selected.row::after {
  position: absolute;
  top: -1px;
  right: 0;
  bottom: -1px;
  left: 36px;
  border: solid #3f7f5c;
  border-width: 2px 0;
  box-shadow: 0 1px #fff;
  content: "";
  pointer-events: none;
}
.selected .row-num {
  background: #d6e8dd;
  color: #217346;
}
.rest {
  flex: 1;
}
.rest .row-num {
  border: none;
}
.rest-fill {
  grid-column: 2 / -1;
  background: #fcba26;
}
.cursor {
  position: absolute;
  top: 410px;
  left: 563px;
}
.vscroll {
  position: absolute;
  top: 19px;
  right: 0;
  box-sizing: border-box;
  border: 1px solid #bbb;
  border-right: none;
  background: #fff;
  width: 9px;
  height: 90px;
}
.vscroll i {
  display: block;
  border-bottom: 1px solid #bbb;
  background: #eee;
  height: 12px;
}
</style>

<style>
body {
  margin: 0;
  overflow: hidden;
}
</style>
